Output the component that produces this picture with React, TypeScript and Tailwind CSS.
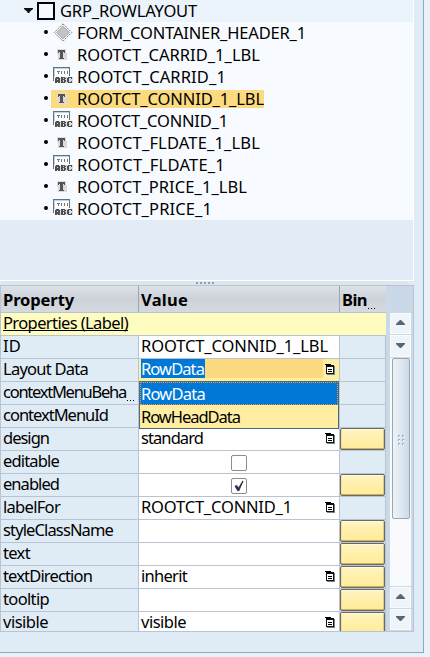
import { useLayoutEffect, useRef, useState } from "react";

/** Text whose tracking is adjusted so that it fills a given advance width. */
function Fit({ text, w, className = "" }: { text: string; w: number; className?: string }) {
  const ref = useRef<HTMLSpanElement>(null);
  const [spacing, setSpacing] = useState(0);
  useLayoutEffect(() => {
    const el = ref.current;
    if (!el) return;
    el.style.letterSpacing = "0px";
    setSpacing((w - el.getBoundingClientRect().width) / text.length);
  }, [text, w]);
  return (
    <span ref={ref} className={`inline-block whitespace-pre ${className}`} style={{ letterSpacing: spacing }}>
      {text}
    </span>
  );
}

function Dots() {
  return (
    <span className="ml-px inline-flex gap-[2px] align-[-3px]">
      <i className="size-px bg-black" />
      <i className="size-px bg-black" />
      <i className="size-px bg-black" />
    </span>
  );
}

type Kind = "header" | "label" | "field";
const NODES: { name: string; w: number; kind: Kind; selected?: boolean }[] = [
  { name: "FORM_CONTAINER_HEADER_1", w: 229, kind: "header" },
  { name: "ROOTCT_CARRID_1_LBL", w: 183, kind: "label" },
  { name: "ROOTCT_CARRID_1", w: 149, kind: "field" },
  { name: "ROOTCT_CONNID_1_LBL", w: 187, kind: "label", selected: true },
  { name: "ROOTCT_CONNID_1", w: 151, kind: "field" },
  { name: "ROOTCT_FLDATE_1_LBL", w: 183, kind: "label" },
  { name: "ROOTCT_FLDATE_1", w: 148, kind: "field" },
  { name: "ROOTCT_PRICE_1_LBL", w: 170, kind: "label" },
  { name: "ROOTCT_PRICE_1", w: 135, kind: "field" },
];

function NodeIcon({ kind }: { kind: Kind }) {
  if (kind === "header")
    return (
      <svg width="20" height="20" viewBox="0 0 20 20" className="shrink-0">
        <path d="M10 0.8 L18.7 9.5 L10 18.2 L1.3 9.5Z" fill="#fff" stroke="#777" strokeDasharray="2 0.8" />
        <path d="M10 3.2 L16.3 9.5 L10 15.8 L3.7 9.5Z" fill="#c4c4c4" stroke="#a0a0a0" />
      </svg>
    );
  if (kind === "label")
    return (
      <svg width="20" height="20" viewBox="0 0 20 20" shapeRendering="crispEdges" className="shrink-0">
        <path d="M4 4h9v4h1v7H5v-5H4z" fill="#dcdcdc" />
        <path d="M5 5h7v3h-1v-1h-1v6h1v1H6v-1h1V7H6v1H5z" fill="#555" />
      </svg>
    );
  return (
    <svg width="20" height="20" viewBox="0 0 20 20" shapeRendering="crispEdges" className="shrink-0">
      <path d="M1 1h15v8H1z" fill="#fff" />
      <path d="M0 0h17v1H1v13H0zM16 1h1v8h-1z" fill="#64727c" />
      <path d="M1 1h15v1H2v8H1z" fill="#b9d3ec" />
      <path d="M4 4h3v1H6v2H5V5H4zM8 4h1v3H8zM11 4h1v3h-1zM14 4h1v3h-1z" fill="#777" />
      <path d="M2 10h18v6H2z" fill="#d9dce0" />
      <path
        d="M3 10h3v1h1v5H5v-1.5H4V16H2v-5h1zM4 11.5v1.5h1v-1.5zM8 10h4v1h1v1h-1v1h1v2h-1v1H8zM10 11v1h1v-1zM10 13v2h1v-2zM15 10h4v2h-1v-1h-2v4h2v-1h1v2h-4v-1h-1v-4h1z"
        fill="#4f4f4f"
        fillRule="evenodd"
      />
    </svg>
  );
}

function ListIcon() {
  return (
    <svg width="10" height="11" viewBox="0 0 10 11" shapeRendering="crispEdges" className="shrink-0">
      <path d="M2 2h8v9H2z" fill="#6d8793" />
      <path d="M1 1h8v9H1z" fill="#111" />
      <path d="M2 3h6v6H2z" fill="#fff" />
      <path d="M0 0h6v1H5v1H4v1H2V2H1V1H0z" fill="#000" />
      <path d="M3 5h4v1H3zM3 7h4v1H3z" fill="#000" />
    </svg>
  );
}

type Row = {
  prop: string;
  w: number;
  cut?: boolean;
  value?: string;
  vw?: number;
  list?: boolean;
  check?: "on" | "off";
  bind?: boolean;
  active?: boolean;
};
const ROWS: Row[] = [
  { prop: "ID", w: 18, value: "ROOTCT_CONNID_1_LBL", vw: 187 },
  { prop: "Layout Data", w: 85, value: "RowData", vw: 64, list: true, active: true },
  { prop: "contextMenuBeha", w: 123, cut: true },
  { prop: "contextMenuId", w: 105 },
  { prop: "design", w: 46, value: "standard", vw: 62, list: true, bind: true },
  { prop: "editable", w: 56, check: "off" },
  { prop: "enabled", w: 56, check: "on", bind: true },
  { prop: "labelFor", w: 57, value: "ROOTCT_CONNID_1", vw: 151, list: true },
  { prop: "styleClassName", w: 110, bind: true },
  { prop: "text", w: 27, bind: true },
  { prop: "textDirection", w: 89, value: "inherit", vw: 46, list: true, bind: true },
  { prop: "tooltip", w: 46, bind: true },
  { prop: "visible", w: 45, value: "visible", vw: 45, list: true, bind: true },
];

function ScrollButton({ up = false, className = "" }: { up?: boolean; className?: string }) {
  return (
    <div
      className={`flex w-[21px] shrink-0 items-center justify-center border border-[#f9fbfd] bg-[#eff4f9] pb-[2px] ${className}`}
    >
      <svg width="9" height="5" viewBox="0 0 9 5">
        <path d={up ? "M4 0h1l4 4v1H0V4z" : "M0 0h9v1L5 5H4L0 1z"} fill="#526779" />
      </svg>
    </div>
  );
}

function PropertyRow({ row, last }: { row: Row; last: boolean }) {
  return (
    <div className={`flex shrink-0 border-[#b8c4d4] leading-[20px] ${last ? "h-[20px]" : "h-[23px] border-b"}`}>
      <div className="w-[137px] shrink-0 bg-[#dfebf5] pl-0.5">
        <Fit text={row.prop} w={row.w} />
        {row.cut && <Dots />}
      </div>
      <div
        className={`flex w-[201px] shrink-0 items-start border-l border-[#b8c4d4] pr-[4px] pl-[2px] ${
          row.active ? "bg-[#ffeea2]" : "bg-white"
        }`}
      >
        {row.active ? (
          <div className="flex h-[19px] w-[182px] bg-[#fcda80]">
            <span className="h-[19px] w-[64px] bg-[#0078d7] text-white">
              <Fit text="RowData" w={63} />
            </span>
          </div>
        ) : (
          row.value && <Fit text={row.value} w={row.vw ?? 0} />
        )}
        {row.check && (
          <div className="mt-1 ml-[90px] flex size-4 items-center justify-center rounded-[2px] border border-[#8c8c8c] bg-white">
            {row.check === "on" && (
              <svg width="10" height="12" viewBox="0 0 10 12">
                <path d="M0.5 6 L3 5 L4.4 7.5 L8.4 0.8 L9.6 1 L5.2 11 H3.4Z" fill="#332f4c" />
              </svg>
            )}
          </div>
        )}
        {row.list && (
          <div className="mt-[5px] ml-auto">
            <ListIcon />
          </div>
        )}
      </div>
      <div className="w-[47px] shrink-0 border-x border-[#b8c4d4] bg-[#dfebf5]">
        {row.bind && (
          <div
            className={`rounded-[2px] border border-[#6c6960] bg-linear-to-b from-[#fff5c4] via-[#ffefaa] to-[#ffeb99] ${
              last
                ? "h-[20px] rounded-b-none border-b-0 shadow-[inset_0_1px_0_#fffadd,inset_1px_0_0_#f5e29a,inset_-1px_0_0_#e5cc7b]"
                : "h-[22px] shadow-[inset_0_1px_0_#fffadd,inset_0_-1px_0_#c9b163,inset_1px_0_0_#f5e29a,inset_-1px_0_0_#e5cc7b]"
            }`}
          />
        )}
      </div>
    </div>
  );
}

export default function App() {
  return (
    <div className="h-[657px] w-[430px] overflow-hidden bg-[#e9f0f7] font-['Noto_Sans',sans-serif] text-[16.5px] text-black">
      <div className="h-[653px] w-[424px] border-r border-b border-[#8ba9c3] bg-[#dfebf5]">
        <div className="h-[281px] w-[414px] border-r border-b border-white bg-[#e1ecf7]">
          <div className="flex h-[22px] items-center bg-[#ebf3fb] leading-[22px]">
            <svg width="9" height="5" viewBox="0 0 9 5" className="mr-[4px] ml-[24px] mb-[2px]">
              <path d="M0 0h9v1L5.5 4v1h-2V4L0 1z" fill="#111" />
            </svg>
            <span className="size-[18px] border-2 border-[#000010] bg-[#f6faff]" />
            <span className="ml-[5px]">
              <Fit text="GRP_ROWLAYOUT" w={137} />
            </span>
          </div>
          <div className="bg-[#f7fbff]">
            {NODES.map((n) => (
              <div key={n.name} className="flex h-[22px] items-center leading-[22px]">
                <span className="mr-[3px] ml-[44px] mb-[2px] size-1 rounded-full bg-black" />
                <div className={`flex h-[18px] items-center pl-[2px] ${n.selected ? "bg-[#fcda80]" : ""}`}>
                  <NodeIcon kind={n.kind} />
                  <span className="ml-1">
                    <Fit text={n.name} w={n.w} />
                  </span>
                </div>
              </div>
            ))}
          </div>
        </div>
        <div className="flex h-1 w-[409px] items-center justify-center gap-[2px] bg-[#dce7ed]">
          {[0, 1, 2, 3, 4].map((i) => (
            <i key={i} className="size-[2px] bg-[#8f9eae]" />
          ))}
        </div>
        <div className="relative flex h-[347px] w-[414px] border border-[#b8c4d4] bg-[#c9d9e8]">
          <div className="flex h-[345px] w-[385px] shrink-0 flex-col overflow-hidden">
            <div className="flex h-[27px] shrink-0 border-b border-[#b8c4d4] bg-linear-to-b from-[#dce2e8] via-[#cdd2da] to-[#d5dae1] leading-[27px] font-bold">
              <div className="w-[137px] shrink-0 pl-0.5">
                <Fit text="Property" w={71} />
              </div>
              <div className="w-[201px] shrink-0 border-l border-[#9da6b0] pl-[2px]">
                <Fit text="Value" w={47} />
              </div>
              <div className="w-[47px] shrink-0 border-l border-[#9da6b0] pl-[2px]">
                <Fit text="Bin" w={25} />
                <Dots />
              </div>
            </div>
            <div className="h-[23px] shrink-0 border-b border-[#b8c4d4] bg-[#fffcc0] pl-0.5 leading-[20px]">
              <span className="inline-block h-[18px] border-b border-black">
                <Fit text="Properties (Label)" w={125} />
              </span>
            </div>
            {ROWS.map((r, i) => (
              <PropertyRow key={r.prop} row={r} last={i === ROWS.length - 1} />
            ))}
          </div>
          <div className="flex grow flex-col border-r-2 border-l border-[#c9d9e8] pt-[27px] pl-[3px]">
            <ScrollButton up className="h-[21px]" />
            <ScrollButton className="mt-px h-[22px]" />
            <div className="mt-px h-[228px] w-[21px] shrink-0 bg-[#f9fafc] px-[2px]">
              <div className="flex h-[161px] w-[18px] items-center justify-center rounded-[2px] border border-[#9aa7b2] bg-linear-to-r from-[#edf3f8] via-[#dfe8f0] to-[#cbdbe9]">
                <div className="mt-[3px] grid grid-cols-2 gap-x-[2px] gap-y-[2px]">
                  {[0, 1, 2, 3, 4, 5].map((i) => (
                    <i key={i} className="size-[2px] border-t border-l border-[#9daebc] bg-white" />
                  ))}
                </div>
              </div>
            </div>
            <ScrollButton up className="mt-px h-[21px]" />
            <ScrollButton className="mt-px h-[21px]" />
          </div>
          <div className="absolute top-[95px] left-[138px] h-[48px] w-[200px] border border-[#4c6a72] bg-[#ffeea2]">
            <div className="h-[23px] border border-dotted border-[#ef974e] bg-[#0078d7] leading-[22px] text-white">
              <Fit text="RowData" w={64} />
            </div>
            <div className="pl-px leading-[24px]">
              <Fit text="RowHeadData" w={99} />
            </div>
          </div>
        </div>
      </div>
    </div>
  );
}
